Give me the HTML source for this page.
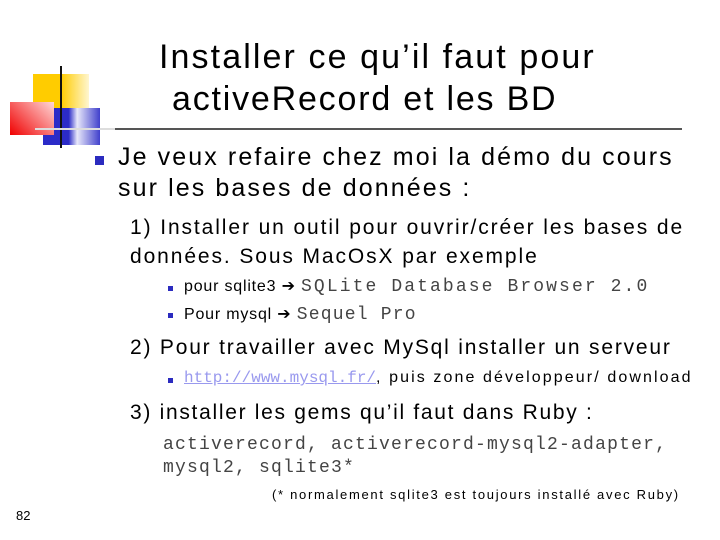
<!DOCTYPE html>
<html><head><meta charset="utf-8"><style>
body{margin:0;width:720px;height:540px;background:#fff;position:relative;overflow:hidden;font-family:"Liberation Sans",sans-serif;color:#000}
.a{position:absolute;white-space:nowrap}
.m{font-family:"Liberation Mono",monospace;color:#444}
.b{position:absolute;background:#2b2bbf}
</style></head><body>
<div class="a" style="left:33px;top:74px;width:56px;height:34px;background:linear-gradient(90deg,#ffcc00 50%,#fff6d0)"></div>
<div class="a" style="left:43px;top:108px;width:57px;height:37px;background:linear-gradient(90deg,#2b2bc8 45%,#e8e8fa 60%,#4040cc)"></div>
<div class="a" style="left:10px;top:102px;width:44px;height:33px;background:linear-gradient(45deg,#f00000,#ffd8d8)"></div>
<div class="a" style="left:60px;top:66px;width:2px;height:82px;background:#111"></div>
<div class="a" style="left:35px;top:128px;width:80px;height:2px;background:#ddd"></div>
<div class="a" style="left:115px;top:128px;width:567px;height:2px;background:#555"></div>
<div class="a" style="left:159px;top:38px;font-size:34px;letter-spacing:2.1px">Installer ce qu’il faut pour</div>
<div class="a" style="left:172px;top:80px;font-size:34px;letter-spacing:1.8px">activeRecord et les BD</div>
<div class="b" style="left:95px;top:156px;width:9px;height:9px"></div>
<div class="a" style="left:118px;top:142px;font-size:25px;line-height:31px;letter-spacing:2.1px">Je veux refaire chez moi la démo du cours<br>sur les bases de données :</div>
<div class="a" style="left:130px;top:213px;font-size:21px;line-height:29px;letter-spacing:1.9px">1) Installer un outil pour ouvrir/créer les bases de<br>données. Sous MacOsX par exemple</div>
<div class="b" style="left:168px;top:286px;width:5px;height:5px"></div>
<div class="a" style="left:184px;top:276px;font-size:16px"><span style="letter-spacing:0.8px">pour sqlite3 ➔ </span><span class="m" style="font-size:18px;letter-spacing:2.1px">SQLite Database Browser 2.0</span></div>
<div class="b" style="left:168px;top:313px;width:5px;height:5px"></div>
<div class="a" style="left:184px;top:304px;font-size:16px"><span style="letter-spacing:0.8px">Pour mysql ➔ </span><span class="m" style="font-size:18px;letter-spacing:1.2px">Sequel Pro</span></div>
<div class="a" style="left:130px;top:336px;font-size:21px;letter-spacing:1.8px">2) Pour travailler avec MySql installer un serveur</div>
<div class="b" style="left:168px;top:378px;width:5px;height:5px"></div>
<div class="a" style="left:184px;top:369px;font-size:16px"><span class="m" style="color:#9999ee;text-decoration:underline">http://www.mysql.fr/</span><span style="letter-spacing:2.1px">, puis zone développeur/ download</span></div>
<div class="a" style="left:130px;top:401px;font-size:21px;letter-spacing:1.7px">3) installer les gems qu’il faut dans Ruby :</div>
<div class="a m" style="left:163px;top:434px;font-size:18px;line-height:23px;letter-spacing:1.2px">activerecord, activerecord-mysql2-adapter,<br>mysql2, sqlite3*</div>
<div class="a" style="left:272px;top:487px;font-size:13px;letter-spacing:1.7px">(* normalement sqlite3 est toujours installé avec Ruby)</div>
<div class="a" style="left:16px;top:508px;font-size:13px">82</div>
</body></html>
